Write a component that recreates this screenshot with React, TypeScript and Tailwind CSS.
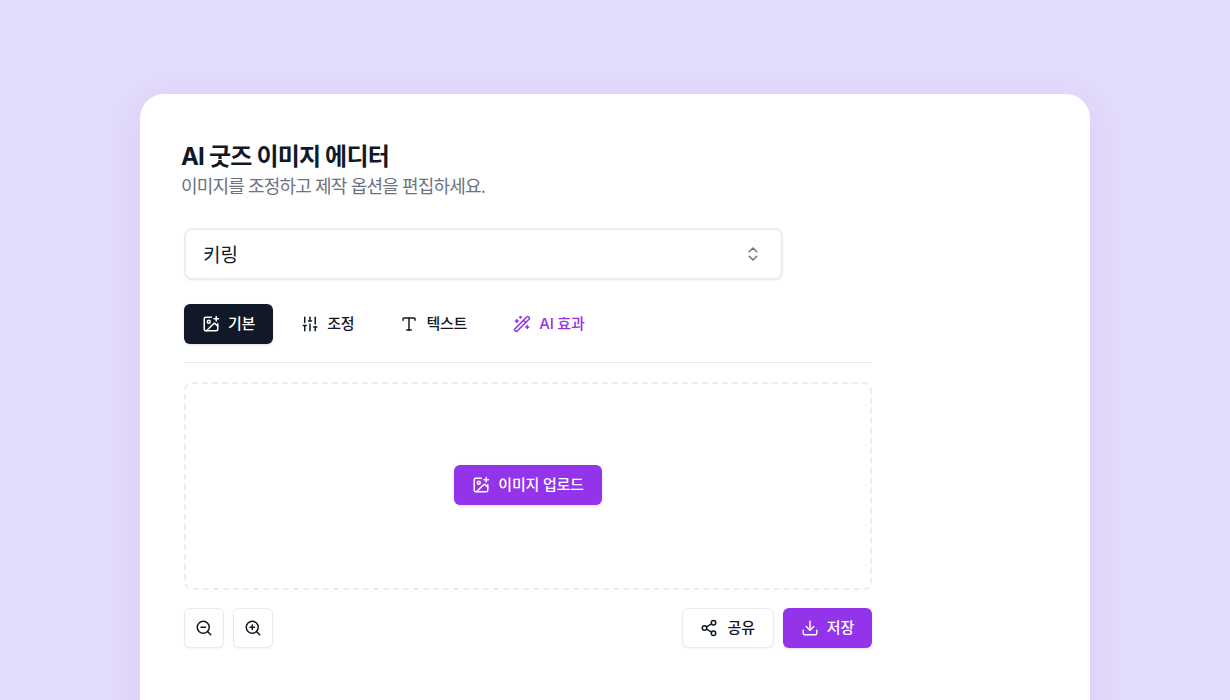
import React from "react";
import {
  ChevronsUpDown,
  Download,
  ImagePlus,
  Share2,
  SlidersVertical,
  Type,
  WandSparkles,
  ZoomIn,
  ZoomOut,
} from "lucide-react";

const tabs = [
  { label: "기본", icon: ImagePlus, className: "bg-[#111827] text-white shadow-sm" },
  { label: "조정", icon: SlidersVertical, className: "text-[#111827]" },
  { label: "텍스트", icon: Type, className: "text-[#111827]" },
  { label: "AI 효과", icon: WandSparkles, className: "text-[#9333ea]" },
];

const outlineBtn =
  "flex h-10 items-center justify-center rounded-md border border-[#e9eaef] bg-white text-[#111827] shadow-xs";

const labelText = "text-[15px] font-medium tracking-[-0.2px]";

export default function App() {
  return (
    <div
      className="h-[700px] overflow-hidden bg-[#e3dcfb] pt-[94px]"
      style={{ fontFamily: 'Inter, "Noto Sans CJK KR", sans-serif' }}
    >
      <div className="mx-auto h-[700px] w-[950px] rounded-3xl bg-white pl-[41px] pt-[47px] shadow-[0_8px_40px_rgba(124,58,237,0.1)]">
        <h1 className="text-2xl leading-8 font-bold tracking-[-0.8px] text-[#111827]">AI 굿즈 이미지 에디터</h1>
        <p className="text-lg leading-7 tracking-[-0.85px] text-[#6b7280]">
          이미지를 조정하고 제작 옵션을 편집하세요.
        </p>

        <div className="ml-[3px] mt-[27px] w-[688px]">
          {/* product select */}
          <div className="flex h-[52px] w-[599px] items-center justify-between rounded-lg border-2 border-[#ecedf1] bg-white pl-[17px] pr-[19px] shadow-xs">
            <span className="pt-[5px] text-[19px] text-[#111827]">키링</span>
            <ChevronsUpDown className="h-[18px] w-[18px] text-[#6b7280]" />
          </div>

          {/* tabs */}
          <div className="mt-[24px] flex gap-[10px] border-b border-[#e5e7eb] pb-[18px]">
            {tabs.map(({ label, icon: Icon, className }) => (
              <button
                key={label}
                type="button"
                className={`flex h-10 items-center gap-2 rounded-md px-[18px] ${labelText} ${className}`}
              >
                <Icon className="h-[18px] w-[18px]" />
                {label}
              </button>
            ))}
          </div>

          {/* upload area */}
          <div className="mt-[19px] flex h-[208px] items-center justify-center rounded-lg border-2 border-dashed border-[#ecedf1] pb-[2px]">
            <button
              type="button"
              className={`flex h-10 items-center gap-2 rounded-md bg-[#9333ea] px-[18px] text-white shadow-sm ${labelText}`}
            >
              <ImagePlus className="h-[18px] w-[18px]" />
              이미지 업로드
            </button>
          </div>

          {/* toolbar */}
          <div className="mt-[18px] flex items-center justify-between">
            <div className="flex gap-[9px]">
              <button type="button" className={`${outlineBtn} w-10`}>
                <ZoomOut className="h-[18px] w-[18px]" />
              </button>
              <button type="button" className={`${outlineBtn} w-10`}>
                <ZoomIn className="h-[18px] w-[18px]" />
              </button>
            </div>
            <div className="flex gap-[9px]">
              <button type="button" className={`${outlineBtn} gap-[10px] pl-[17px] pr-[18px] ${labelText}`}>
                <Share2 className="h-[18px] w-[18px]" />
                공유
              </button>
              <button
                type="button"
                className={`flex h-10 items-center gap-2 rounded-md bg-[#9333ea] px-[18px] text-white shadow-sm ${labelText}`}
              >
                <Download className="h-[18px] w-[18px]" />
                저장
              </button>
            </div>
          </div>
        </div>
      </div>
    </div>
  );
}
